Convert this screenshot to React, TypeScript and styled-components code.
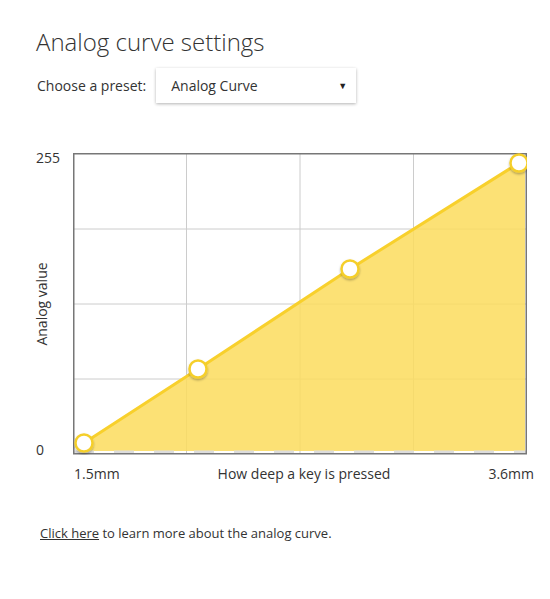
import React from "react";
import styled, { createGlobalStyle } from "styled-components";

const GlobalStyle = createGlobalStyle`
  body {
    margin: 0;
    background: #ffffff;
    font-family: "Open Sans", "Liberation Sans", sans-serif;
    color: #333333;
  }
`;

const Page = styled.div`
  padding: 26px 0 0 36px;
  width: 514px;
`;

const Title = styled.h1`
  margin: 0;
  font-size: 24px;
  font-weight: 300;
  line-height: 32px;
  color: #333333;
`;

const PresetRow = styled.div`
  display: flex;
  align-items: center;
  margin-top: 10px;
  gap: 10px;
`;

const Label = styled.span`
  font-size: 14px;
  padding-left: 1px;
`;

const SelectBox = styled.div`
  width: 200px;
  height: 35px;
  box-sizing: border-box;
  display: flex;
  align-items: center;
  justify-content: space-between;
  padding: 0 9px 0 15px;
  font-size: 14px;
  background: #ffffff;
  box-shadow: 0 1px 3px rgba(0, 0, 0, 0.3);
`;

const Caret = styled.span`
  font-size: 9px;
  color: #222222;
`;

const ChartWrap = styled.div`
  margin-top: 50px;
  display: flex;
  flex-direction: column;
`;

const ChartRow = styled.div`
  display: flex;
`;

const YAxis = styled.div`
  width: 37px;
  height: 310px;
  margin-top: -4px;
  display: flex;
  flex-direction: column;
  justify-content: space-between;
  align-items: flex-start;
  font-size: 14px;
  line-height: 18px;
`;

const YTitle = styled.span`
  transform: rotate(-90deg);
  white-space: nowrap;
  width: 12px;
  display: flex;
  justify-content: center;
  font-size: 14px;
`;

const XAxis = styled.div`
  display: flex;
  justify-content: space-between;
  width: 460px;
  margin: 5px 0 0 38px;
  font-size: 14px;
  line-height: 20px;
`;

const Footer = styled.p`
  margin: 40px 0 0 4px;
  font-size: 13px;
`;

const Link = styled.a`
  color: #333333;
  text-decoration: underline;
`;

const W = 454;
const H = 300;
const points = [
  [11, 290],
  [125, 216],
  [277, 116],
  [446, 10],
];

const Plot = () => {
  const area =
    points.map((p) => p.join(",")).join(" ") +
    ` ${W - 2},6 ${W - 2},${H - 2} 11,${H - 2}`;
  return (
    <svg width={W} height={H + 2} style={{ display: "block" }}>
      <defs>
        <filter id="sh" x="-50%" y="-50%" width="200%" height="200%">
          <feDropShadow dx="0" dy="1.5" stdDeviation="1.2" floodColor="#000" floodOpacity="0.3" />
        </filter>
      </defs>
      {[113.5, 227, 340.5].map((x) => (
        <line key={x} x1={x} y1={0} x2={x} y2={H} stroke="#cccccc" strokeWidth={1} />
      ))}
      {[76, 151, 226].map((y) => (
        <line key={y} x1={0} y1={y} x2={W} y2={y} stroke="#cccccc" strokeWidth={1} />
      ))}
      <polygon points={area} fill="#fcdc5d" fillOpacity={0.85} />
      <line x1={1} y1={H - 1} x2={W - 1} y2={H - 1} stroke="#dddddd" strokeWidth={3} strokeDasharray="20 20" />
      <polyline
        points={points.map((p) => p.join(",")).join(" ") + ` ${W - 2},6`}
        fill="none"
        stroke="#f8d02c"
        strokeWidth={3}
      />
      <rect x={0.75} y={0.75} width={W - 1.5} height={H} fill="none" stroke="#777777" strokeWidth={1.5} />
      {points.map(([x, y]) => (
        <circle key={x} cx={x} cy={y} r={8.5} fill="#ffffff" stroke="#f5cf2c" strokeWidth={2.5} filter="url(#sh)" />
      ))}
    </svg>
  );
};

export default function App() {
  return (
    <Page>
      <GlobalStyle />
      <Title>Analog curve settings</Title>
      <PresetRow>
        <Label>Choose a preset:</Label>
        <SelectBox>
          Analog Curve
          <Caret>▼</Caret>
        </SelectBox>
      </PresetRow>
      <ChartWrap>
        <ChartRow>
          <YAxis>
            <span>255</span>
            <YTitle>Analog value</YTitle>
            <span>0</span>
          </YAxis>
          <Plot />
        </ChartRow>
        <XAxis>
          <span>1.5mm</span>
          <span>How deep a key is pressed</span>
          <span>3.6mm</span>
        </XAxis>
      </ChartWrap>
      <Footer>
        <Link href="#">Click here</Link> to learn more about the analog curve.
      </Footer>
    </Page>
  );
}
